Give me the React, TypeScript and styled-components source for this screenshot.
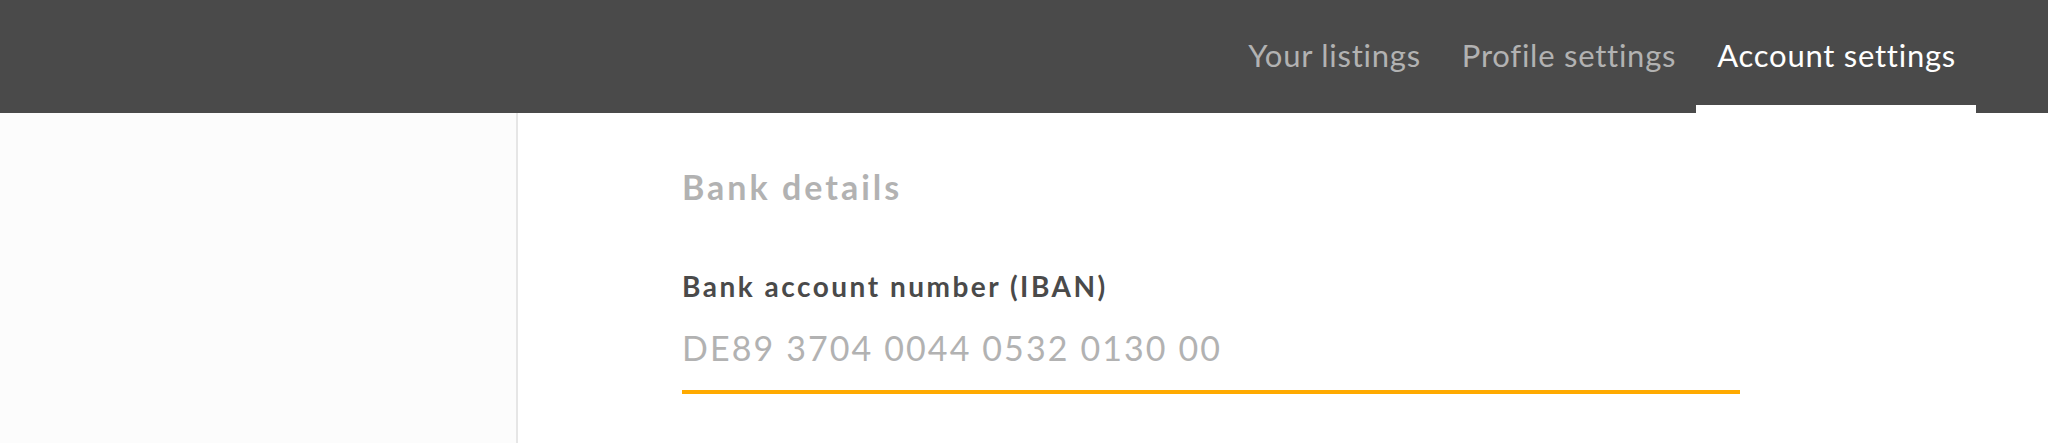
import React from "react";
import styled, { createGlobalStyle } from "styled-components";

const Global = createGlobalStyle`
  html, body { margin: 0; padding: 0; background: #ffffff; }
  body { font-family: Lato, "Noto Sans", sans-serif; }
  * { box-sizing: border-box; }
`;

const Page = styled.div`
  display: flex;
  flex-direction: column;
  min-height: 443px;
`;

const TopBar = styled.header`
  height: 113px;
  background: #4a4a4a;
  display: flex;
  justify-content: flex-end;
  padding-right: 72px;
`;

const Tabs = styled.nav`
  display: flex;
  height: 100%;
`;

const Tab = styled.a<{ $active?: boolean }>`
  display: flex;
  align-items: center;
  padding: 8px 20px 4px 21px;
  font-size: 31px;
  font-weight: 400;
  letter-spacing: 0.75px;
  color: ${(p) => (p.$active ? "#ffffff" : "#b2b2b2")};
  text-decoration: none;
  border-bottom: 8px solid ${(p) => (p.$active ? "#ffffff" : "transparent")};
  white-space: nowrap;
`;

const Body = styled.div`
  flex: 1;
  display: flex;
  min-height: 330px;
`;

const Sidebar = styled.aside`
  width: 518px;
  flex-shrink: 0;
  background: #fcfcfc;
  border-right: 2px solid #e6e6e6;
`;

const Main = styled.main`
  flex: 1;
  padding: 54px 0 0 164px;
`;

const Form = styled.div`
  width: 1058px;
  display: flex;
  flex-direction: column;
`;

const Heading = styled.h2`
  margin: 0 0 63px;
  font-size: 34px;
  line-height: 40px;
  font-weight: 700;
  letter-spacing: 3px;
  color: #b2b2b2;
`;

const Label = styled.label`
  display: block;
  font-size: 28px;
  line-height: 32px;
  font-weight: 700;
  letter-spacing: 2.5px;
  color: #4a4a4a;
  margin-bottom: 25px;
`;

const Input = styled.input`
  display: block;
  width: 100%;
  height: 67px;
  margin: 0;
  padding: 0 0 23px 0;
  border: none;
  border-bottom: 4px solid #ffaa00;
  outline: none;
  background: transparent;
  font-family: Lato, "Noto Sans", sans-serif;
  font-size: 34px;
  line-height: 40px;
  font-weight: 400;
  letter-spacing: 2.1px;
  color: #4a4a4a;
  &::placeholder {
    color: #b2b2b2;
  }
`;

export default function App() {
  return (
    <Page>
      <Global />
      <TopBar>
        <Tabs>
          <Tab href="#">Your listings</Tab>
          <Tab href="#">Profile settings</Tab>
          <Tab href="#" $active>
            Account settings
          </Tab>
        </Tabs>
      </TopBar>
      <Body>
        <Sidebar />
        <Main>
          <Form>
            <Heading>Bank details</Heading>
            <Label htmlFor="iban">Bank account number (IBAN)</Label>
            <Input id="iban" placeholder="DE89 3704 0044 0532 0130 00" />
          </Form>
        </Main>
      </Body>
    </Page>
  );
}
